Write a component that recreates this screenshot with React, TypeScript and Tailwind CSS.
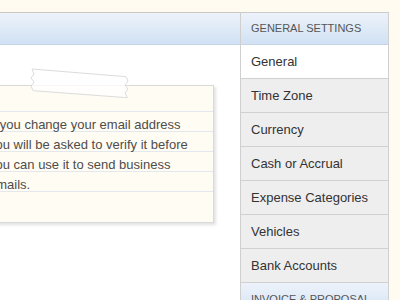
import React from 'react';

const items = ['General', 'Time Zone', 'Currency', 'Cash or Accrual', 'Expense Categories', 'Vehicles', 'Bank Accounts'];

const noteLines = ['If you change your email address', 'you will be asked to verify it before', 'you can use it to send business', 'emails.', ''];

const Tape: React.FC = () => (
  <svg className="absolute left-[47px] top-[-22px]" width="106" height="38" viewBox="0 0 106 38">
    <polygon
      points="4,5 98,12.7 100,17 97,21 100,25 97,29 99.3,33.7 5,26.7 3,22 6,18 3,14 6,10"
      fill="rgba(255,255,255,0.75)"
      stroke="#dcdcdc"
      strokeWidth="1"
    />
  </svg>
);

const App: React.FC = () => {
  return (
    <div className="w-[400px] h-[300px] overflow-hidden bg-[#fffbf1] pt-[12px] font-['Liberation_Sans',Arial,sans-serif]">
      <div className="flex h-[288px]">
        <div className="w-[240px] shrink-0 bg-white flex flex-col">
          <div className="h-[33px] shrink-0 border-t border-b border-t-[#cbc6bf] border-b-[#c5d4e6] bg-gradient-to-b from-[#edf2fa] to-[#d1e2f4]" />
          <div className="relative shrink-0 mt-[40px] -ml-[20px] w-[234px] border border-[#d9d9d9] bg-[#fffcf3] pt-[25px] pb-[11px] pl-[8px] shadow-[2px_2px_3px_rgba(0,0,0,0.12)]">
            <Tape />
            {noteLines.map((line, i) => (
              <div key={i} className="h-[20px] border-t border-[#e3e8ee] pt-[3px] text-[13px] leading-[20px] text-[#4d4d4d] whitespace-nowrap">
                {line}
              </div>
            ))}
          </div>
        </div>
        <div className="w-[149px] shrink-0 border-l border-r border-[#cfcfcf] flex flex-col">
          <div className="h-[33px] shrink-0 border-t border-b border-t-[#cbcbcb] border-b-[#c5d4e6] bg-gradient-to-b from-[#edf2fa] to-[#d1e2f4] flex items-center pl-[10px] text-[11px] text-[#555] uppercase">
            General Settings
          </div>
          {items.map((item, i) => (
            <div
              key={item}
              className={`h-[34px] shrink-0 border-b border-[#d0d0d0] flex items-center pl-[10px] text-[13px] text-[#333] ${i === 0 ? 'bg-white' : 'bg-[#eeeeee]'}`}
            >
              {item}
            </div>
          ))}
          <div className="h-[33px] shrink-0 bg-gradient-to-b from-[#edf2fa] to-[#d1e2f4] flex items-center pl-[10px] text-[11px] text-[#555] uppercase">
            Invoice &amp; Proposal
          </div>
        </div>
      </div>
    </div>
  );
};

export default App;
